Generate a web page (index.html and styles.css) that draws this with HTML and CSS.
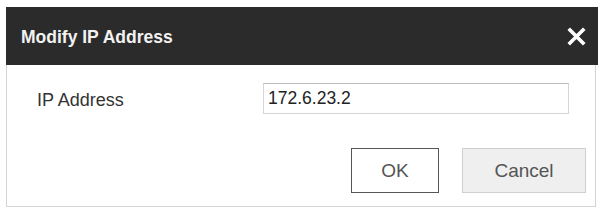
FILE: index.html
```html
<html lang="en">
   <head>
      <meta charset="UTF-8">
      <meta name="viewport" content="width=device-width, initial-scale=1.0">
      <title>Modify IP Address</title>
      <link rel="stylesheet" href="styles.css">
   </head>
   <body>
      <div class="dialog">
         <header>
            <h1>Modify IP Address</h1>
            <button class="close" aria-label="Close">
               <svg width="19" height="19" viewBox="0 0 19 19">
                  <path d="M3 3 L16 16 M16 3 L3 16" stroke="#fff" stroke-width="3.6" stroke-linecap="square" fill="none" />
               </svg>
            </button>
         </header>
         <div class="content">
            <div class="form-row">
               <label for="ip">IP Address</label>
               <input type="text" id="ip" value="172.6.23.2" />
            </div>
            <div class="actions">
               <button class="ok">OK</button>
               <button class="cancel">Cancel</button>
            </div>
         </div>
      </div>
   </body>
</html>
```

FILE: styles.css
```css
body {
font-family: "Liberation Sans", Arial, sans-serif;
margin: 0;
padding: 0;
background-color: #fff;
}
.dialog {
margin: 7px 3px 0 6px;
}
header {
display: flex;
justify-content: space-between;
align-items: center;
height: 58px;
padding: 0 12px 0 15px;
background-color: #2b2b2b;
}
header h1 {
margin: 0;
padding-top: 3px;
font-size: 17.5px;
font-weight: bold;
color: #f2f2f2;
}
header .close {
display: flex;
padding: 0;
background: none;
border: none;
cursor: pointer;
}
.content {
height: 141px;
border: 1px solid #d4d4d4;
border-top: none;
margin-right: 2px;
}
.form-row {
display: flex;
align-items: center;
padding: 18px 0 0 30px;
}
.form-row label {
width: 226px;
font-size: 18px;
color: #333;
padding-top: 3px;
}
.form-row input {
width: 306px;
height: 31px;
padding: 0 4px;
border: 1px solid #d6d6d6;
border-top-color: #bcbcbc;
font-family: inherit;
font-size: 17.5px;
color: #222;
background-color: #fff;
outline: none;
}
.actions {
display: flex;
justify-content: flex-end;
gap: 23px;
padding: 34px 9px 0 0;
}
.actions button {
height: 45px;
font-family: inherit;
font-size: 19px;
color: #555;
cursor: pointer;
}
.actions .ok {
width: 88px;
background-color: #fff;
border: 1px solid #555;
}
.actions .cancel {
width: 124px;
background-color: #efefef;
border: 1px solid #cfcfcf;
}
```
